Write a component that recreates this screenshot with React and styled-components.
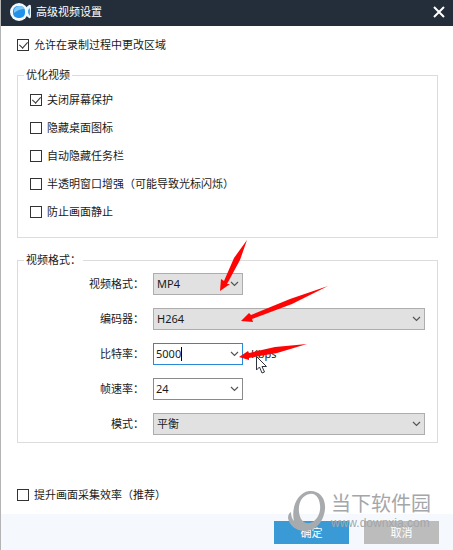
import React, { useState } from 'react'
import styled, { createGlobalStyle } from 'styled-components'

const options = [
    { id: 'screensaver', label: '关闭屏幕保护', checked: true },
    { id: 'icons', label: '隐藏桌面图标' },
    { id: 'taskbar', label: '自动隐藏任务栏' },
    { id: 'layered', label: '半透明窗口增强（可能导致光标闪烁）' },
    { id: 'still', label: '防止画面静止' }
]

export default function App() {

    const [bitrate, setBitrate] = useState('5000')
    const [fps, setFps] = useState('24')

    return (
        <>
            <GlobalStyle />
            <Window>
                <TitleBar>
                    <CameraLogo />
                    <h1>高级视频设置</h1>
                    <CloseButton type="button" aria-label="关闭">
                        <svg width="12" height="12" viewBox="0 0 12 12">
                            <path d="M1 1L11 11M11 1L1 11" stroke="#fff" strokeWidth="2" />
                        </svg>
                    </CloseButton>
                </TitleBar>

                <Main>
                    <CheckRow id="region" label="允许在录制过程中更改区域" checked />

                    <Group>
                        <legend>优化视频</legend>
                        <CheckList>
                            {options.map(option => <CheckRow key={option.id} {...option} />)}
                        </CheckList>
                    </Group>

                    <Group>
                        <legend>视频格式：</legend>
                        <Fields>
                            <Select id="format" label="视频格式：" value="MP4" />
                            <Select id="codec" label="编码器：" value="H264" wide />
                            <Combo id="bitrate" label="比特率：" value={bitrate} onChange={setBitrate} unit="Kbps" active />
                            <Combo id="fps" label="帧速率：" value={fps} onChange={setFps} />
                            <Select id="mode" label="模式：" value="平衡" wide />
                        </Fields>
                    </Group>

                    <CheckRow id="capture" label="提升画面采集效率（推荐）" />
                </Main>

                <Footer>
                    <Button type="button" $primary>确定</Button>
                    <Button type="button">取消</Button>
                </Footer>

                <Watermark>
                    <svg width="40" height="42" viewBox="0 0 40 42" aria-hidden="true">
                        <path
                            fillRule="evenodd"
                            d="M22 1C32 0 39 8 38 19C37 31 29 41 18 41C9 41 2 35 1 28C1 25 2 23 4 22C4 26 5 29 7 31C4 18 10 3 22 1ZM23 4C15 5 11 13 12 22C13 30 17 34 23 33C30 31 34 23 33 15C32 7 28 3 23 4Z"
                            fill="#a8abad"
                        />
                    </svg>
                    <div>
                        <strong>当下软件园</strong>
                        <span>www.downxia.com</span>
                    </div>
                </Watermark>

                <Marks width="453" height="550" viewBox="0 0 453 550" aria-hidden="true">
                    <g fill="#fe0505">
                        <path d="M220 291L221 279L224 281L234 258L247 240L240 260L227 284L230 284Z" />
                        <path d="M241 321L249 313L251 315L290 299L328 286L292 304L252 319L253 322Z" />
                        <path d="M239 357L248 351L249 353L275 347L307 344L277 353L249 358L249 360Z" />
                    </g>
                    <path
                        d="M256.5 356.5V370L259.5 367L262 373L264.5 372L262 366.5H266.5Z"
                        fill="#fff"
                        stroke="#30343c"
                    />
                </Marks>
            </Window>
        </>
    )
}

function CameraLogo() {
    return (
        <svg width="22" height="20" viewBox="0 0 22 20" aria-hidden="true">
            <path d="M14 7L19 3Q21 2 21 5V14Q21 17 19 16L14 12Z" fill="#e9f6ff" />
            <path d="M18 8L20 6V14L18 11Z" fill="#49a8e8" />
            <circle cx="9" cy="10" r="9" fill="#f3f9fe" />
            <rect x="3" y="4" width="12" height="12" rx="5" fill="#2292e8" />
            <path d="M4 11Q3 5 9 4Q14 4 14 7Q9 7 4 11Z" fill="#7cc8fa" />
        </svg>
    )
}

function Chevron() {
    return (
        <svg width="9" height="6" viewBox="0 0 9 6" aria-hidden="true">
            <path d="M1 1L4.5 4.5L8 1" fill="none" stroke="#555" strokeWidth="1.2" />
        </svg>
    )
}

function CheckRow({ id, label, checked }) {
    return (
        <CheckLine>
            <input type="checkbox" id={id} defaultChecked={checked} />
            <label htmlFor={id}>{label}</label>
        </CheckLine>
    )
}

function Select({ id, label, value, wide }) {
    return (
        <>
            <label htmlFor={id}>{label}</label>
            <SelectBox $wide={wide}>
                <select id={id} defaultValue={value}>
                    <option>{value}</option>
                </select>
                <Chevron />
            </SelectBox>
        </>
    )
}

function Combo({ id, label, value, onChange, unit, active }) {
    return (
        <>
            <label htmlFor={id}>{label}</label>
            <ComboLine>
                <ComboBox $active={active}>
                    <input type="text" id={id} value={value} onChange={e => onChange(e.target.value)} />
                    {active && <Caret />}
                    <button type="button" aria-label={label}><Chevron /></button>
                </ComboBox>
                {unit && <span>{unit}</span>}
            </ComboLine>
        </>
    )
}

const GlobalStyle = createGlobalStyle`
    * {
        box-sizing: border-box;
    }
    body {
        margin: 0;
        background: #fff;
    }
    body, input, select, button {
        font-family: "Noto Sans", "Noto Sans CJK SC", sans-serif;
        font-size: 11px;
        line-height: 16px;
        color: #1a1a1a;
    }
`
const Window = styled.div`
    position: relative;
    display: flex;
    flex-direction: column;
    min-height: 100vh;
    border-left: 1px solid #b4b4b4;
`
const TitleBar = styled.header`
    display: flex;
    align-items: center;
    gap: 4px;
    height: 26px;
    padding: 0 8px 2px 9px;
    background: #232e3a;
    h1 {
        flex: 1;
        margin: 0;
        font-size: 11px;
        font-weight: 400;
        color: #fff;
    }
`
const CloseButton = styled.button`
    display: flex;
    padding: 0;
    border: 0;
    background: none;
`
const Main = styled.main`
    flex: 1;
    padding: 11px 15px 11px 16px;
    > div:last-child {
        margin-top: 44px;
    }
`
const CheckLine = styled.div`
    display: flex;
    align-items: center;
    gap: 5px;
    height: 16px;
    input {
        appearance: none;
        width: 12px;
        height: 12px;
        margin: 0;
        border: 1px solid #333;
        background: #fff;
    }
    input:checked {
        display: grid;
        place-items: center;
    }
    input:checked::after {
        content: '';
        width: 4px;
        height: 7px;
        margin-bottom: 2px;
        border: solid #333;
        border-width: 0 1px 1px 0;
        transform: rotate(42deg);
    }
`
const Group = styled.fieldset`
    min-width: 0;
    margin: 14px 0 0;
    padding: 0 12px 7px;
    border: 1px solid #dcdcdc;
    legend {
        margin-left: -6px;
        padding: 0 2px;
    }
`
const CheckList = styled.div`
    display: grid;
    gap: 12px;
    padding: 9px 0 10px;
`
const Fields = styled.div`
    display: grid;
    grid-template-columns: 114px 1fr;
    gap: 13px 9px;
    align-items: center;
    padding-top: 5px;
    > label {
        text-align: right;
    }
`
const SelectBox = styled.div`
    position: relative;
    width: ${({ $wide }) => $wide ? '100%' : '90px'};
    select {
        appearance: none;
        display: block;
        width: 100%;
        height: 22px;
        padding: 0 20px 0 3px;
        border: 1px solid #adadad;
        border-radius: 0;
        background: #e1e1e1;
    }
    svg {
        position: absolute;
        top: 8px;
        right: 4px;
        pointer-events: none;
    }
`
const ComboLine = styled.div`
    display: flex;
    align-items: center;
    gap: 8px;
`
const ComboBox = styled.div`
    display: flex;
    align-items: center;
    width: 90px;
    height: 22px;
    padding-left: 2px;
    border: 1px solid ${({ $active }) => $active ? '#2a8ad8' : '#8a8a8a'};
    background: #fff;
    input {
        field-sizing: content;
        max-width: 64px;
        padding: 0;
        border: 0;
        outline: 0;
        background: none;
    }
    button {
        display: flex;
        margin-left: auto;
        padding: 3px;
        border: 0;
        background: none;
    }
`
const Caret = styled.span`
    width: 1px;
    height: 14px;
    background: #000;
`
const Footer = styled.footer`
    display: flex;
    justify-content: flex-end;
    gap: 15px;
    padding: 7px 14px 6px;
    background: #f5f9fe;
`
const Button = styled.button`
    width: 75px;
    height: 23px;
    padding: 0;
    border: 0;
    background: ${({ $primary }) => $primary ? '#3a9ad5' : '#bcbcbc'};
    color: #fff;
`
const Watermark = styled.div`
    position: absolute;
    right: 22px;
    bottom: 18px;
    display: flex;
    align-items: flex-start;
    gap: 4px;
    color: #a4a7aa;
    pointer-events: none;
    div {
        display: flex;
        flex-direction: column;
        padding-top: 3px;
    }
    strong {
        font-size: 20px;
        font-weight: 400;
        line-height: 22px;
    }
    span {
        font-family: "Liberation Sans", sans-serif;
        font-size: 12px;
        line-height: 16px;
    }
`
const Marks = styled.svg`
    position: absolute;
    top: 0;
    left: -1px;
    pointer-events: none;
`
